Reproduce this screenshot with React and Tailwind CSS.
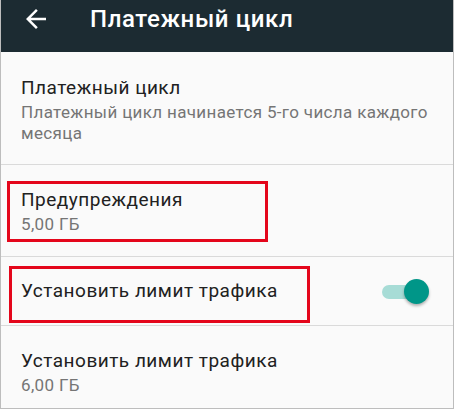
import React from "react";

const font = { fontFamily: "Roboto, 'Noto Sans', sans-serif" };

function Row({ title, sub, children, className = "" }) {
  return (
    <div className={`flex items-center border-b border-[#dadada] pl-[20px] pr-[24px] ${className}`}>
      <div className="flex-1">
        <div className="text-[19px] leading-[24px] tracking-[0.5px] text-[#212121]">{title}</div>
        {sub && (
          <div className="mt-[2px] whitespace-nowrap text-[17px] leading-[21px] tracking-[0.35px] text-[#757575]">{sub}</div>
        )}
      </div>
      {children}
    </div>
  );
}

export default function App() {
  return (
    <div className="relative h-[409px] w-[454px] overflow-hidden border-x border-b border-[#bdbdbd] bg-[#fafafa]" style={font}>
      <div className="flex h-[52px] items-start bg-[#1c2b32] pt-[3px]">
        <svg viewBox="0 0 24 24" className="ml-[20px] mt-[1px] h-[30px] w-[30px]" fill="#ffffff">
          <path d="M20 11H7.83l5.59-5.59L12 4l-8 8 8 8 1.41-1.41L7.83 13H20v-2z" />
        </svg>
        <div className="ml-[39px] text-[24px] font-medium leading-[32px] tracking-[0.6px] text-white">Платежный цикл</div>
      </div>
      <Row
        title="Платежный цикл"
        sub={<>Платежный цикл начинается 5-го числа каждого<br />месяца</>}
        className="pt-[24px] pb-[20px]"
      />
      <Row title="Предупреждения" sub="5,00 ГБ" className="pt-[23px] pb-[21px]" />
      <Row title="Установить лимит трафика" className="h-[69px]">
        <div className="flex items-center pt-[1px]">
          <div className="h-[14px] w-[38px] rounded-full bg-[#a7dcd6]" />
          <div className="-ml-[16px] h-[25px] w-[25px] rounded-full bg-[#009688] shadow-[0_2px_3px_rgba(0,0,0,0.3)]" />
        </div>
      </Row>
      <Row title="Установить лимит трафика" sub="6,00 ГБ" className="border-b-0 pt-[23px]" />

      <div className="absolute left-[6px] top-[181px] h-[61px] w-[261px] border-[3px] border-[#e4061b]" />
      <div className="absolute left-[8px] top-[266px] h-[57px] w-[301px] border-[3px] border-[#e4061b]" />
    </div>
  );
}
